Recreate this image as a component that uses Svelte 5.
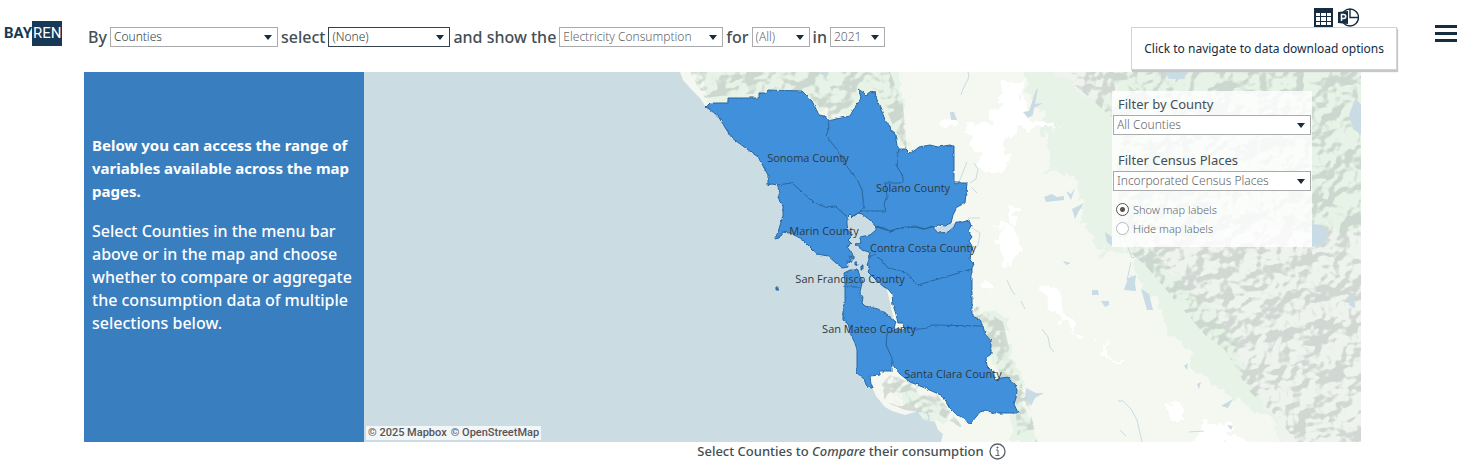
<script lang="ts">
	interface Filter {
		id: string;
		lead: string;
		value: string;
		size: string;
		tone?: string;
	}

	interface Place {
		name: string;
		x: number;
		y: number;
	}

	const filters: Filter[] = [
		{ id: 'by', lead: 'By', value: 'Counties', size: 'xl', tone: 'dark' },
		{ id: 'select', lead: 'select', value: '(None)', size: 'md', tone: 'active' },
		{ id: 'measure', lead: 'and show the', value: 'Electricity Consumption', size: 'lg' },
		{ id: 'sector', lead: 'for', value: '(All)', size: 'sm' },
		{ id: 'year', lead: 'in', value: '2021', size: 'xs' }
	];

	const places: Place[] = [
		{ name: 'Sonoma County', x: 808, y: 162 },
		{ name: 'Solano County', x: 913, y: 192 },
		{ name: 'Marin County', x: 824, y: 235 },
		{ name: 'Contra Costa County', x: 923, y: 252 },
		{ name: 'San Francisco County', x: 850, y: 283 },
		{ name: 'San Mateo County', x: 869, y: 333 },
		{ name: 'Santa Clara County', x: 953, y: 378 }
	];

	// county groups that touch are one shape, the shared borders are drawn over them
	const shapes = [
		'M706 107L710 103H728V98H759V93H766L768 90L802 91L807 96L812 101L817 111L819 115L825 116L828 121L850 116L855 107L860 100L861 97L858 89L864 93L866 95L870 92L875 93L876 97L879 105L882 112L884 117L886 123L890 126L891 131L895 134L897 145L899 149H906L910 153L914 151L919 147L930 145L938 147L950 145L954 146V183H967L965 203L957 207L953 215L951 223L944 226L938 225L933 228L925 229L915 226L900 228L890 231L884 228L876 227L870 220L862 214L858 213L853 217L850 214L847 217V224L848 231L852 236L848 240L852 244L847 246L849 250L853 253L852 258L848 256L852 262L847 261L848 267L843 268L836 263L828 256L817 254L808 245L802 239L790 233L783 232L779 238L775 239L778 232L783 216V205L780 202L778 196L780 193L777 185L772 184L768 185V175L758 157L747 149L732 138L726 129L718 116L709 109Z',
		'M876 226L890 231L900 228L915 227L925 229L932 226L936 231L940 233L948 232L954 227L956 222H963L969 220L971 226L968 231L972 237L969 241L972 246L970 260L974 264L972 268V316L979 319L983 326L985 334L991 341V354L986 358L987 366L992 371L995 380L1002 378L1008 377L1010 380L1015 384L1017 390L1016 398L1014 404L1018 413H990L986 410L980 412L976 417L970 424L966 419L961 417L955 413L950 408L943 396L925 388L910 382L900 374L895 368L890 360L886 345L887 333L896 329H905L902 323H898L896 314L893 305L892 294L888 289L884 287L878 282L868 272L870 267L867 265L870 257L869 252L862 250L855 244L862 242L859 237L870 235L876 230Z',
		'M844 273L850 270H858L860 277L863 281L861 287L860 293L863 297L862 303L865 306L878 309L888 315L896 322L893 329L887 333L886 345L892 358V371H880V375L870 376L871 383L873 388L867 387L864 379L857 373V350L855 343L850 333L848 324L843 320V306L845 303V283Z',
		'M851 256h3v3h-3zM855 262h2l1 3h-3zM861 266h2v3h-2zM776 288h2v2h-2z'
	];

	const borders = [
		'M828 121L829 128L826 136L835 147L842 158L848 168L857 179L862 190L864 207L860 212L853 216',
		'M777 185L792 183L800 190L812 201L825 207L835 206L845 215L848 217',
		'M899 149L896 165L903 176V183H885L887 195L884 205L886 211H860',
		'M869 257L875 254L881 260L888 268L906 272L912 280L918 285L972 269',
		'M905 328L920 329L927 328L932 325L984 326',
		'M845 287H861',
		'M876 227L890 231L900 228L915 227L925 229L932 227'
	];

	let labels = $state('show');
</script>

<main class="dashboard">
	<header class="bar">
		<a class="logo" href="#home" aria-label="BayREN"><span>BAY</span><span class="logo__box">REN</span></a>

		<form class="filters">
			{#each filters as f (f.id)}
				<label class="lead" for={f.id}>{f.lead}</label>
				<span class="pick pick--{f.size} {f.tone ?? ''}">
					<select id={f.id}><option>{f.value}</option></select>
				</span>
			{/each}
		</form>

		<div class="tools">
			<button class="icon" aria-label="Data download" aria-describedby="tip">
				<svg width="19" height="19" viewBox="0 0 19 19">
					<rect width="19" height="19" fill="#152c43" />
					<path d="M2 5h4v3H2zM7 5h5v3H7zM13 5h4v3h-4zM2 9h4v4H2zM7 9h5v4H7zM13 9h4v4h-4zM2 14h4v3H2zM7 14h5v3H7zM13 14h4v3h-4z" fill="#fff" />
				</svg>
			</button>
			<button class="icon" aria-label="PowerPoint download">
				<svg width="21" height="19" viewBox="0 0 21 19">
					<circle cx="12" cy="9.500" r="8.500" fill="#fff" stroke="#152c43" stroke-width="1.400" />
					<path d="M12 1v8.500h8.500" fill="none" stroke="#152c43" stroke-width="1.400" />
					<path d="M0 4l10-1v13L0 15z" fill="#152c43" />
					<path d="M3.500 13V6.500h2.200a1.900 1.900 0 0 1 0 4H3.500" fill="none" stroke="#fff" stroke-width="1.500" />
				</svg>
			</button>
			<div class="tip" id="tip" role="tooltip">Click to navigate to data download options</div>
		</div>

		<button class="menu" aria-label="Menu"><i></i><i></i><i></i></button>
	</header>

	<div class="content">
		<aside class="intro">
			<p class="intro__lead">Below you can access the range of variables available across the map pages.</p>
			<p>Select Counties in the menu bar above or in the map and choose whether to compare or aggregate the consumption data of multiple selections below.</p>
		</aside>

		<section class="map" aria-label="County map">
			<svg class="map__canvas" viewBox="364 72 997 370" preserveAspectRatio="xMidYMid slice">
				<defs>
					<filter id="rough" x="-5%" y="-5%" width="110%" height="110%" color-interpolation-filters="sRGB">
						<feTurbulence type="fractalNoise" baseFrequency="0.2" numOctaves="2" seed="4" />
						<feDisplacementMap in="SourceGraphic" scale="3" xChannelSelector="R" yChannelSelector="G" />
					</filter>
					<filter id="torn" x="-10%" y="-10%" width="120%" height="120%" color-interpolation-filters="sRGB">
						<feTurbulence type="fractalNoise" baseFrequency="0.08" numOctaves="3" seed="9" />
						<feDisplacementMap in="SourceGraphic" scale="24" xChannelSelector="R" yChannelSelector="G" />
					</filter>
					<!-- shaded relief: lit noise, cut to a few flat greys -->
					<filter id="relief" x="0" y="0" width="100%" height="100%" color-interpolation-filters="sRGB">
						<feTurbulence type="fractalNoise" baseFrequency="0.04 0.045" numOctaves="3" seed="21" />
						<feDiffuseLighting surfaceScale="18" lighting-color="#fff" result="lit">
							<feDistantLight azimuth="225" elevation="50" />
						</feDiffuseLighting>
						<feColorMatrix values="0 0 0 0 0.68  0 0 0 0 0.71  0 0 0 0 0.7  -1 0 0 0 1" />
						<feComponentTransfer result="shade">
							<feFuncA type="discrete" tableValues="0 0 0.06 0.18 0.32 0.42 0.45 0.45" />
						</feComponentTransfer>
						<feComposite in="shade" in2="SourceAlpha" operator="in" />
					</filter>
				</defs>

				<rect x="364" y="72" width="997" height="370" fill="#cbdce3" />
				<path fill="#f5f8f1" d="M680 72L683 80L690 88L700 98L706 107L722 115L742 138L765 150L785 180L795 205L846 208L870 216L876 226L872 260L886 285L895 325L880 330L855 345L862 376L871 385L876 396L885 407L892 411L905 415L918 411L927 412L935 422L938 430L943 434L941 442H1361V72Z" />

				<g class="forest" fill="#e6f3e6" filter="url(#torn)">
					<path d="M692 64H897L903 100L907 150L880 122L850 120L800 100L720 112L706 97Z" />
					<path d="M1020 60H1375V456H1295L1280 425L1255 412L1240 400L1215 385L1195 365L1188 350L1168 330L1160 305L1140 280L1125 248L1100 252L1085 220L1080 180L1050 170L1045 120L1030 95Z" />
					<path d="M975 305L1003 318L1015 365L1025 400L1035 440L1010 442L1012 410L985 350Z" />
					<path d="M900 380L925 392L950 415L940 420L910 405L888 385Z" />
				</g>
				<g class="upland" fill="#eef3ed" filter="url(#torn)">
					<path d="M1140 235L1375 230V456H1295L1270 415L1250 380L1225 325L1190 290L1160 262Z" />
					<path d="M1040 65L1110 70L1125 105L1085 95Z" />
				</g>
				<g filter="url(#relief)">
					<path d="M690 72H890L903 105L907 150L895 130L878 90L860 85L850 115L830 120L805 90L720 96L705 98Z" />
					<path d="M1060 72H1361V442H1297L1275 415L1250 392L1225 350L1205 335L1175 300L1145 265L1120 245L1115 120Z" />
					<path d="M975 305L1003 322L1012 360L1028 400L1037 442H1018L1015 400L1000 375L990 340L972 318Z" />
					<path d="M882 384L890 375L935 392L953 415L965 430L940 415L905 410L885 402Z" />
				</g>
				<g fill="#fff" filter="url(#torn)">
					<path d="M1004 84L1022 82L1027 112L1055 125L1020 130L1008 142L1002 172L985 170L970 145L972 125L990 122Z" />
					<path d="M1006 210h12v14h-12zM998 225L1018 230V253L1008 268L1000 250Z" />
					<path d="M1040 285L1060 288L1062 310L1075 320L1080 335L1060 320L1048 305Z" />
					<path d="M1100 342L1108 355L1123 358L1115 362L1102 354ZM1170 402h8l4 18h-10zM982 280h13v9h-13zM940 117h12v8h-12zM1195 435L1218 420L1235 432L1250 445H1193Z" />
				</g>

				<g class="water" fill="#c9dbe4">
					<path d="M1023 112L1029 111L1036 90L1038 88L1035 104L1043 103L1034 108L1033 115L1028 118Z" />
					<path d="M950 112h4l3 8h-6zM1044 197l8-3 5 3 7-1v4l-18 2zM1066 191l5 3 4-6-4 12zM1072 209l12-6-5 8-4 8z" />
					<path d="M1128 278l8-3-1 8 1 8-12-1zM1141 289l8 5 4 16h-6zM1092 290h6l1 5h-7zM1101 301h8v4l-4 2zM1063 261l8 2-5 2z" />
					<path d="M1026 388l10 5h8l-9 5-4 8-6-9zM1221 406l12-7-5 9zM1197 384l4-2-2 7zM1184 366l4-3-1 7zM1227 425l6 1-2 4zM1351 294l3 2 1 12-6-3z" />
					<path d="M1165 72h22l-3 7h-15zM1355 99l6 5v30l-8-5-4-14zM1312 224l11 1 5 8-4 11-12 3zM820 72h8v3h-6zM1105 232l7 5v9l-5-4z" />
					<path d="M933 228L955 223L956 227L948 233L938 234Z" />
				</g>
				<g fill="none" stroke="#c9dbe4">
					<path d="M968 72l1 5-6 12-2 6M959 182l8-20M974 163l4 6-2 10-6 4M971 187l6 6M1126 242l6 16 8-3 5-3M1131 262l-4 18" />
					<path d="M1007 280l5 11 3 4M1021 301l4 8M1042 329l6 8 2 10 4 5M1118 401h5l8 8 6 11 5 22M1120 430l6 6M1189 432l15-1M1271 350l10-20M1291 366l14-6M972 228l8 5-2 12-5 6M968 218h12" />
				</g>

				<g filter="url(#rough)" stroke="#29669f" stroke-linejoin="round">
					{#each shapes as d}
						<path {d} fill="#4190db" />
					{/each}
					{#each borders as d}
						<path {d} fill="none" />
					{/each}
				</g>

				{#if labels === 'show'}
					<g class="places">
						{#each places as p (p.name)}
							<text x={p.x} y={p.y}>{p.name}</text>
						{/each}
					</g>
				{/if}
			</svg>

			<div class="panel">
				<label class="panel__title" for="county">Filter by County</label>
				<span class="pick">
					<select id="county"><option>All Counties</option></select>
				</span>
				<label class="panel__title" for="places">Filter Census Places</label>
				<span class="pick">
					<select id="places"><option>Incorporated Census Places</option></select>
				</span>
				<div class="radios">
					<label><input type="radio" name="labels" value="show" bind:group={labels} />Show map labels</label>
					<label><input type="radio" name="labels" value="hide" bind:group={labels} />Hide map labels</label>
				</div>
			</div>

			<div class="credit"><a href="#mapbox">© 2025 Mapbox</a><a href="#osm">© OpenStreetMap</a></div>
		</section>

		<p class="caption">
			<span>Select Counties to <em>Compare</em> their consumption</span>
			<svg width="17" height="17" viewBox="0 0 17 17" fill="none" stroke="#5b6266">
				<circle cx="8.500" cy="8.500" r="7.500" stroke-width="1.300" />
				<path d="M7 7h2v5M6.500 12.500h4M8 4h1v1H8z" />
			</svg>
		</p>
	</div>
</main>

<style>
	:global(body) {
		margin: 0;
		background: #fff;
	}

	.dashboard {
		font-family: 'Noto Sans', 'Open Sans', sans-serif;
		color: #444f54;
	}

	.bar {
		display: flex;
		height: 72px;
		box-sizing: border-box;
		padding: 0 12px 0 4px;
	}

	.logo {
		display: flex;
		align-items: center;
		flex: none;
		width: 84px;
		height: 25px;
		margin-top: 21px;
		font: bold 15px/25px Roboto, 'Liberation Sans', sans-serif;
		color: #173857;
		text-decoration: none;
	}

	.logo__box {
		padding: 0 1px;
		background: #173857;
		color: #fff;
		font-weight: normal;
	}

	.filters {
		display: flex;
		align-items: center;
		gap: 3px;
		height: 20px;
		margin-top: 27px;
	}

	.lead {
		font-size: 16px;
		font-weight: 500;
		line-height: 20px;
		white-space: nowrap;
	}

	.pick {
		position: relative;
		display: block;
		color: #5f6668;
	}

	.pick::after {
		content: '';
		position: absolute;
		top: 8px;
		right: 6px;
		border: 4px solid transparent;
		border-top: 5px solid #152c43;
		border-bottom: 0;
		pointer-events: none;
	}

	.pick select {
		appearance: none;
		display: block;
		width: 100%;
		height: 20px;
		padding: 0 16px 0 3px;
		border: 1px solid #a9abac;
		border-radius: 0;
		background: #fff;
		color: inherit;
		font: 300 12px/18px 'Noto Sans', 'Open Sans', sans-serif;
	}

	.pick--xl { width: 168px; }
	.pick--lg { width: 164px; }
	.pick--md { width: 122px; }
	.pick--sm { width: 58px; }
	.pick--xs { width: 55px; }

	.dark,
	.active {
		color: #333e44;
	}

	.active select {
		border-color: #35424c;
	}

	.tools {
		position: relative;
		display: flex;
		gap: 5px;
		align-items: flex-start;
		margin: 8px 76px 0 auto;
	}

	.icon,
	.menu {
		padding: 0;
		border: 0;
		background: none;
	}

	.icon svg {
		display: block;
	}

	.tip {
		position: absolute;
		z-index: 2;
		top: 19px;
		right: -38px;
		padding: 10px 12px;
		border: 1px solid #d0d4d4;
		background: #fff;
		box-shadow: 1px 2px 1px #c4c8c8;
		color: #152c43;
		font-size: 12px;
		line-height: 21px;
		white-space: nowrap;
	}

	.menu {
		display: flex;
		flex-direction: column;
		gap: 4px;
		width: 22px;
		height: 18px;
		margin-top: 25px;
	}

	.menu i {
		width: 22px;
		height: 3px;
		background: #152c43;
	}

	.content {
		display: grid;
		grid-template-columns: 280px 1fr;
		grid-template-rows: minmax(370px, auto) auto;
		margin: 0 108px 0 84px;
	}

	.intro {
		box-sizing: border-box;
		padding: 62px 8px 0;
		background: #397ebf;
		color: #fff;
		font-size: 16px;
		font-weight: 500;
		line-height: 23px;
	}

	.intro p {
		margin: 0 0 17px;
	}

	.intro .intro__lead {
		font-size: 15px;
		font-weight: 700;
	}

	.map {
		position: relative;
		overflow: hidden;
		min-width: 0;
	}

	.map__canvas {
		position: absolute;
		inset: 0;
		width: 100%;
		height: 100%;
	}

	.places {
		font-family: 'Open Sans', 'Noto Sans', sans-serif;
		font-size: 11px;
		text-anchor: middle;
		fill: #2d3a45;
	}

	.panel {
		position: absolute;
		top: 19px;
		right: 49px;
		box-sizing: border-box;
		width: 200px;
		padding: 3px 1px 9px;
		background: rgb(255 255 255 / 82%);
	}

	.panel__title {
		display: block;
		padding-left: 5px;
		font-size: 13px;
		line-height: 21px;
	}

	.pick + .panel__title {
		margin-top: 15px;
	}

	.radios {
		padding: 9px 3px 0;
		color: #5f686b;
		font-size: 11px;
		font-weight: 300;
		line-height: 19px;
	}

	.radios label {
		display: flex;
		align-items: center;
		gap: 4px;
	}

	.radios input {
		appearance: none;
		width: 13px;
		height: 13px;
		margin: 0;
		border: 1px solid #b5babc;
		border-radius: 50%;
		background: #fff;
	}

	.radios input:checked {
		border-color: #555;
		background: radial-gradient(circle, #555 0 2px, #fff 3px);
	}

	.credit {
		position: absolute;
		left: 2px;
		bottom: 2px;
		display: flex;
		gap: 4px;
		padding: 0 2px;
		background: rgb(255 255 255 / 75%);
		font: 500 11px/14px Roboto, sans-serif;
	}

	.credit a {
		color: #555;
		text-decoration: none;
	}

	.caption {
		grid-column: 2;
		display: flex;
		justify-content: center;
		align-items: center;
		gap: 5px;
		margin: 0;
		padding-right: 22px;
		font-size: 13px;
		font-weight: 500;
		line-height: 19px;
	}
</style>
